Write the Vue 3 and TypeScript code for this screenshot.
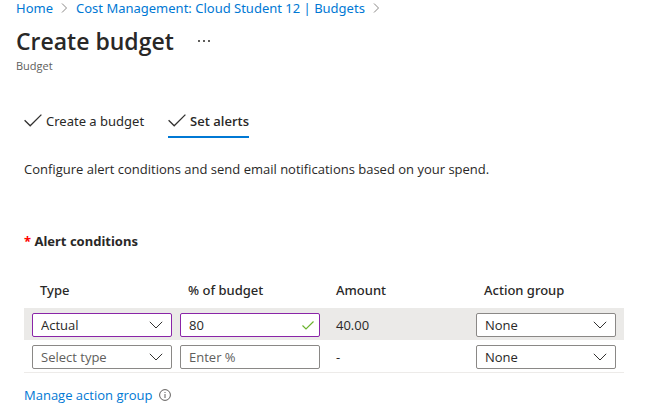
<script setup lang="ts">
import { ref } from 'vue'

interface AlertRow {
  id: number
  type: string
  percent: string
  amount: string
  group: string
}

const rows = ref<AlertRow[]>([
  { id: 1, type: 'Actual', percent: '80', amount: '40.00', group: 'None' },
  { id: 2, type: '', percent: '', amount: '-', group: 'None' },
])
const steps = ['Create a budget', 'Set alerts']
const activeStep = ref('Set alerts')
</script>

<template>
  <main class="page">
    <nav class="breadcrumb" aria-label="Breadcrumb">
      <a href="#home">Home</a>
      <svg class="crumb" viewBox="0 0 7 10" aria-hidden="true"><path d="M1 .5 5.5 5 1 9.5" /></svg>
      <a href="#budgets">Cost Management: Cloud Student 12 | Budgets</a>
      <svg class="crumb" viewBox="0 0 7 10" aria-hidden="true"><path d="M1 .5 5.5 5 1 9.5" /></svg>
    </nav>

    <header class="heading">
      <h1>Create budget</h1>
      <button class="more" type="button" aria-label="More actions">
        <svg viewBox="0 0 12 2" aria-hidden="true"><path d="M0 0h2v2H0zM5 0h2v2H5zM10 0h2v2h-2z" /></svg>
      </button>
    </header>
    <p class="subtitle">Budget</p>

    <section class="content">
      <div class="steps" role="tablist">
        <button
          v-for="step in steps"
          :key="step"
          class="step"
          :class="{ active: step === activeStep }"
          type="button"
          role="tab"
          :aria-selected="step === activeStep"
          @click="activeStep = step"
        >
          <svg viewBox="0 0 18 14" aria-hidden="true"><path d="M.6 6.2 6.2 11.8 17.4.6" /></svg>
          <span>{{ step }}</span>
        </button>
      </div>

      <p class="intro">Configure alert conditions and send email notifications based on your spend.</p>

      <h2><span class="required">*</span> Alert conditions</h2>

      <table class="alerts">
        <thead>
          <tr>
            <th scope="col">Type</th>
            <th scope="col">% of budget</th>
            <th scope="col">Amount</th>
            <th scope="col">Action group</th>
          </tr>
        </thead>
        <tbody>
          <tr v-for="row in rows" :key="row.id" :class="{ filled: row.type }">
            <td>
              <div class="field" :class="{ changed: row.type, empty: !row.type }">
                <select v-model="row.type" aria-label="Type">
                  <option value="" disabled>Select type</option>
                  <option>Actual</option>
                  <option>Forecasted</option>
                </select>
                <svg class="chevron" viewBox="0 0 14 8" aria-hidden="true"><path d="M.8.8 7 7 13.2.8" /></svg>
              </div>
            </td>
            <td>
              <div class="field" :class="{ changed: row.percent }">
                <input v-model="row.percent" type="text" placeholder="Enter %" aria-label="% of budget" />
                <svg v-if="row.percent" class="valid" viewBox="0 0 12 9" aria-hidden="true"><path d="M.5 4.5 4 8 11.5.5" /></svg>
              </div>
            </td>
            <td class="amount">{{ row.amount }}</td>
            <td>
              <div class="field">
                <select v-model="row.group" aria-label="Action group">
                  <option>None</option>
                </select>
                <svg class="chevron" viewBox="0 0 14 8" aria-hidden="true"><path d="M.8.8 7 7 13.2.8" /></svg>
              </div>
            </td>
          </tr>
        </tbody>
      </table>

      <div class="manage">
        <a href="#action-groups">Manage action group</a>
        <svg viewBox="0 0 12 12" role="img" aria-label="Information">
          <circle cx="6" cy="6" r="5.4" />
          <path d="M6 5v4M6 3v1" />
        </svg>
      </div>
    </section>
  </main>
</template>

<style>
body {
  margin: 0;
  background: #fff;
}
</style>

<style scoped>
.page {
  padding: 0 16px;
  font-family: "Noto Sans", "Open Sans", sans-serif;
  font-size: 13px;
  line-height: 18px;
  color: #292827;
}
svg {
  flex: none;
  fill: none;
}
a {
  color: #0078d4;
  text-decoration: none;
}
button {
  padding: 0;
  border: 0;
  background: none;
  color: inherit;
  font: inherit;
}
.breadcrumb {
  display: flex;
  align-items: center;
  gap: 8px;
  line-height: 16px;
}
.crumb {
  width: 7px;
  height: 10px;
  stroke: #8a8886;
}
.heading {
  display: flex;
  align-items: center;
  gap: 24px;
  padding: 9px 0 1px;
}
h1 {
  margin: 0;
  font-family: "Open Sans", "Noto Sans", sans-serif;
  font-size: 23px;
  font-weight: 600;
  line-height: 32px;
}
.more svg {
  display: block;
  width: 12px;
  height: 2px;
  fill: #605e5c;
}
.subtitle {
  margin: 0;
  font-family: "Open Sans", "Noto Sans", sans-serif;
  font-size: 11px;
  line-height: 16px;
  color: #605e5c;
}
.content {
  padding: 32px 8px 0;
}
.steps {
  display: flex;
  gap: 24px;
}
.step {
  display: flex;
  align-items: center;
  gap: 4px;
  height: 32px;
  border-bottom: 2px solid transparent;
}
.step svg {
  width: 18px;
  height: 14px;
  stroke: #323130;
  stroke-width: 1.3;
}
.step.active {
  border-color: #0078d4;
  font-family: "Open Sans", "Noto Sans", sans-serif;
  font-weight: 600;
}
.intro,
.alerts td,
.manage {
  font-family: "Open Sans", "Noto Sans", sans-serif;
}
.intro {
  margin: 22px 0 0;
}
h2 {
  margin: 54px 0 0;
  font-size: 13px;
  font-weight: 700;
  line-height: 18px;
}
.required {
  color: #f00;
}
.alerts {
  width: 100%;
  max-width: 600px;
  margin-top: 22px;
  border-spacing: 0;
  border-bottom: 1px solid #edebe9;
  table-layout: fixed;
}
th {
  height: 36px;
  padding: 0 12px;
  font-weight: 500;
  text-align: left;
}
td {
  padding: 5px 4px 3px;
}
td:first-child {
  padding-left: 8px;
}
td:last-child {
  padding-right: 8px;
}
th:first-child,
th:last-child {
  box-sizing: border-box;
  width: 152px;
}
th:first-child {
  padding-left: 16px;
}
.filled td {
  background: #ebeae8;
}
.alerts .amount {
  padding-left: 12px;
}
.field {
  display: flex;
  align-items: center;
  box-sizing: border-box;
  height: 24px;
  padding: 0 8px 0 0;
  border: 1px solid #8a8886;
  border-radius: 2px;
  background: #fff;
}
.field.changed {
  border-color: #8a25a8;
}
.field select,
.field input {
  flex: 1;
  min-width: 0;
  height: 22px;
  padding: 0 0 0 8px;
  border: 0;
  outline: 0;
  background: transparent;
  color: #292827;
  font: inherit;
  appearance: none;
}
.field.empty select,
.field input::placeholder {
  color: #605e5c;
}
.chevron {
  width: 14px;
  height: 8px;
  stroke: #323130;
  pointer-events: none;
}
.valid {
  width: 12px;
  height: 9px;
  margin-right: -3px;
  stroke: #6bb32e;
  stroke-width: 1.2;
}
.manage {
  display: flex;
  align-items: center;
  gap: 6px;
  padding-top: 13px;
}
.manage svg {
  width: 12px;
  height: 12px;
  stroke: #605e5c;
}
</style>
